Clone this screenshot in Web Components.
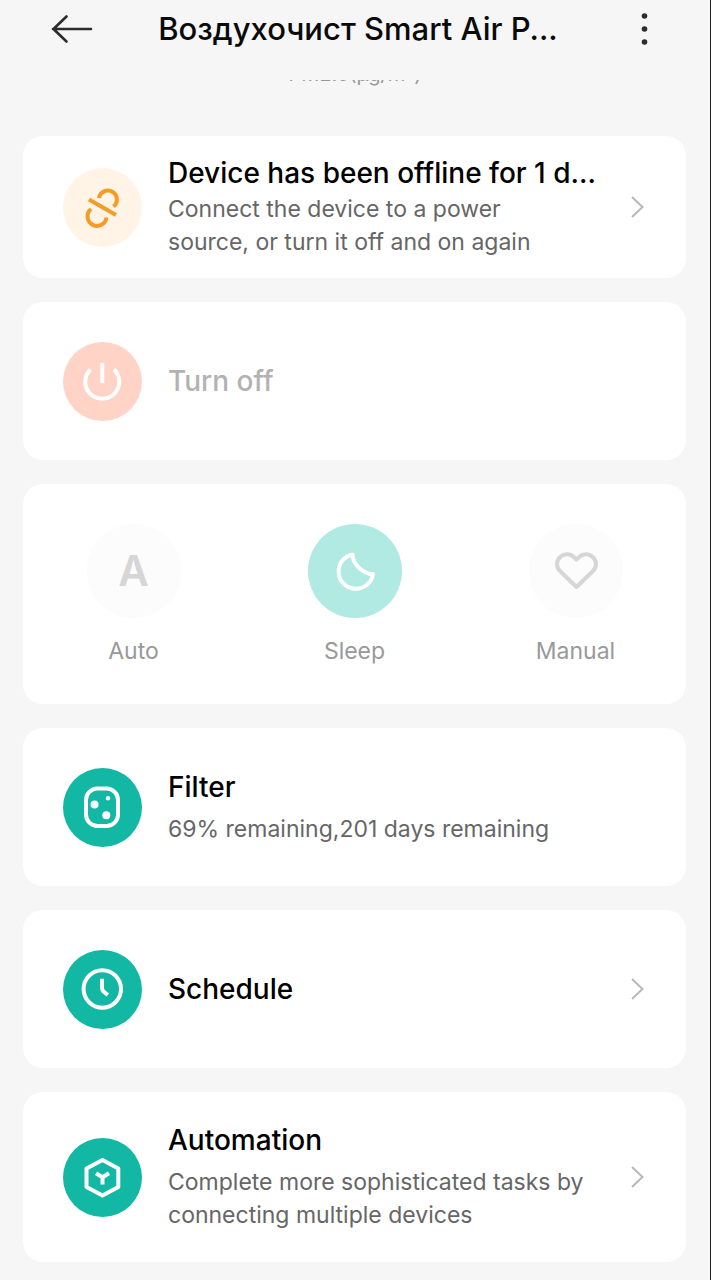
<!DOCTYPE html>
<html lang="en">
<head>
<meta charset="utf-8">
<meta name="viewport" content="width=device-width, initial-scale=1">
<title>Smart Air Purifier</title>
<style>
  body {
    margin: 0;
    background: #f6f6f6;
    font-family: Inter, "Liberation Sans", sans-serif;
  }
</style>
</head>
<body>
<purifier-page></purifier-page>

<script>
const ICONS = {
  offline: `
    <path d="M26 31.5L53 47"/>
    <path d="M36 30A9 9 0 1 1 50.5 38.5"/>
    <path d="M28 41A9.5 9.5 0 1 0 43.5 49.5"/>`,
  power: `
    <path d="M27.5 27.5A17 17 0 1 0 51 27.5"/>
    <path d="M39.3 21V41"/>`,
  filter: `
    <rect x="23" y="20.5" width="32" height="37.5" rx="11.5"/>
    <g fill="currentColor" stroke="none">
      <circle cx="31.5" cy="36.5" r="4"/>
      <circle cx="45" cy="30.3" r="2.2"/>
      <circle cx="43.3" cy="47.3" r="4"/>
    </g>`,
  clock: `
    <circle cx="39.3" cy="39" r="18.7"/>
    <path d="M39 28.8V38Q39 40 40.5 41.5L44.8 45"/>`,
  automation: `
    <path d="M39.5 22L55.3 30.6V49L39.5 57.6L23.5 49V30.6Z"/>
    <path d="M33 35.3L39.5 39.3L46 35.3M39.5 39.3V46.5"/>`
};

class AppHeader extends HTMLElement {
  constructor() {
    super();
    this.attachShadow({ mode: "open" });
  }

  connectedCallback() {
    this.shadowRoot.innerHTML = `
      <style>
        :host {
          display: block;
        }

        header {
          display: grid;
          grid-template-columns: 44px 1fr 44px;
          align-items: center;
          height: 58px;
          padding: 0 44px 22px 50px;
        }

        button {
          display: block;
          width: 44px;
          height: 44px;
          padding: 0;
          border: 0;
          background: none;
          color: #2c2c2c;
        }

        svg {
          display: block;
        }

        h1 {
          margin: 0;
          font-size: 31px;
          line-height: 40px;
          font-weight: 500;
          text-align: center;
          white-space: nowrap;
          color: #0a0a0a;
        }
      </style>

      <header>
        <button type="button" aria-label="Back">
          <svg width="44" height="44" viewBox="0 0 44 44" fill="none" stroke="currentColor" stroke-width="2.6" stroke-linecap="round" stroke-linejoin="round">
            <path d="M41 22H3M16.5 9.5L3.5 22L16.5 34.5"/>
          </svg>
        </button>
        <h1><slot></slot></h1>
        <button type="button" aria-label="More">
          <svg width="44" height="44" viewBox="0 0 44 44" fill="currentColor">
            <circle cx="22.5" cy="9" r="2.8"/>
            <circle cx="22.5" cy="22" r="2.8"/>
            <circle cx="22.5" cy="35" r="2.8"/>
          </svg>
        </button>
      </header>
    `;
  }
}

class InfoCard extends HTMLElement {
  constructor() {
    super();
    this.attachShadow({ mode: "open" });
  }

  connectedCallback() {
    const icon = ICONS[this.getAttribute("icon")] || "";
    const tag = this.hasAttribute("href") ? "a" : this.hasAttribute("action") ? "button" : "div";
    const attrs = tag === "a" ? `href="${this.getAttribute("href")}"` : tag === "button" ? `type="button" disabled` : "";
    const chevron = tag === "a" ? `
      <svg class="chevron" width="16" height="24" viewBox="0 0 16 24" aria-hidden="true">
        <path d="M2 2L12.5 12L2 22" fill="none" stroke="#b8b8b8" stroke-width="2"/>
      </svg>` : "";

    this.shadowRoot.innerHTML = `
      <style>
        :host {
          display: block;
          --tone: #12b8a3;
          --ink: #fff;
          --label: #000;
          --pad: 30px;
          --gap: 8px;
          --min: 158px;
          --wrap: wrap;
        }

        :host([tone="warn"]) {
          --tone: #fff4e6;
          --ink: #f59b26;
          --pad: 19px;
          --gap: 2px;
          --min: 142px;
          --wrap: balance;
        }

        :host([tone="danger"]) {
          --tone: #ffd3c6;
          --label: #b2b2b2;
        }

        .card {
          display: flex;
          align-items: center;
          gap: 26px;
          box-sizing: border-box;
          width: 100%;
          min-height: var(--min);
          padding: var(--pad) 40px;
          border: 0;
          border-radius: 20px;
          background: #fff;
          color: inherit;
          font: inherit;
          text-align: left;
          text-decoration: none;
        }

        .icon {
          flex: none;
          width: 79px;
          height: 79px;
          border-radius: 50%;
          background: var(--tone);
          color: var(--ink);
        }

        .text {
          display: flex;
          flex-direction: column;
          gap: var(--gap);
          flex: 1;
          min-width: 0;
        }

        .title {
          font-size: 28px;
          line-height: 36px;
          font-weight: 500;
          white-space: nowrap;
          color: var(--label);
        }

        ::slotted([slot="detail"]) {
          display: block;
          font-size: 23px;
          line-height: 33px;
          text-wrap: var(--wrap);
          color: #666;
        }

        .chevron {
          flex: none;
        }
      </style>

      <${tag} class="card" ${attrs}>
        <svg class="icon" viewBox="0 0 79 79" fill="none" stroke="currentColor" stroke-width="4" stroke-linejoin="round" aria-hidden="true">${icon}</svg>
        <span class="text">
          <span class="title"><slot></slot></span>
          <slot name="detail"></slot>
        </span>
        ${chevron}
      </${tag}>
    `;
  }
}

class ModeButton extends HTMLElement {
  constructor() {
    super();
    this.attachShadow({ mode: "open" });
  }

  connectedCallback() {
    this.shadowRoot.innerHTML = `
      <style>
        :host {
          display: block;
          --tone: #fcfcfc;
          --ink: #d6d6d6;
        }

        :host([active]) {
          --tone: #b0eae3;
          --ink: #fff;
        }

        button {
          display: flex;
          flex-direction: column;
          align-items: center;
          gap: 17px;
          width: 100%;
          padding: 0;
          border: 0;
          background: none;
          font: inherit;
          font-size: 23px;
          line-height: 32px;
          color: #999;
        }

        .disc {
          display: grid;
          place-items: center;
          width: 94px;
          height: 94px;
          border-radius: 50%;
          background: var(--tone);
          color: var(--ink);
        }
      </style>

      <button type="button" disabled>
        <span class="disc"><slot name="icon"></slot></span>
        <slot></slot>
      </button>
    `;
  }
}

class ModePicker extends HTMLElement {
  constructor() {
    super();
    this.attachShadow({ mode: "open" });
  }

  connectedCallback() {
    this.shadowRoot.innerHTML = `
      <style>
        :host {
          display: grid;
          grid-template-columns: repeat(3, 1fr);
          padding: 40px 0 37px;
          border-radius: 20px;
          background: #fff;
        }
      </style>
      <slot></slot>
    `;
  }
}

class PurifierPage extends HTMLElement {
  constructor() {
    super();
    this.attachShadow({ mode: "open" });
  }

  connectedCallback() {
    this.shadowRoot.innerHTML = `
      <style>
        :host {
          display: block;
          box-sizing: border-box;
          min-height: 100vh;
          border-right: 1px solid #222;
        }

        /* reading that has scrolled under the header */
        .reading {
          display: flex;
          justify-content: center;
          align-items: flex-end;
          height: 6px;
          overflow: hidden;
          font-size: 20px;
          line-height: 24px;
          color: #999;
        }

        main {
          display: flex;
          flex-direction: column;
          gap: 24px;
          padding: 50px 24px 18px 23px;
        }

        .letter {
          font-size: 42px;
          line-height: 48px;
          font-weight: 600;
        }

        mode-button svg {
          display: block;
          fill: none;
          stroke: currentColor;
          stroke-width: 4;
          stroke-linejoin: round;
        }
      </style>

      <app-header>Воздухочист Smart Air P...</app-header>
      <div class="reading">PM2.5(µg/m³)</div>
      <main>
        <info-card icon="offline" tone="warn" href="#offline">
          Device has been offline for 1 d...
          <span slot="detail">Connect the device to a power source, or turn it off and on again</span>
        </info-card>

        <info-card icon="power" tone="danger" action>Turn off</info-card>

        <mode-picker>
          <mode-button>
            <span slot="icon" class="letter">A</span>
            Auto
          </mode-button>
          <mode-button active>
            <svg slot="icon" width="94" height="94" viewBox="0 0 94 94" aria-hidden="true">
              <path d="M44.5 30.5A17.3 17.3 0 1 0 65 50C57 50.5 45 42 44.5 30.5Z"/>
            </svg>
            Sleep
          </mode-button>
          <mode-button>
            <svg slot="icon" width="94" height="94" viewBox="0 0 94 94" aria-hidden="true">
              <path d="M47.5 63L31 47C27 43 27 37 31 33.2C35 29.3 41 29.3 44.8 33L47.5 35.7L50.2 33C54 29.3 60 29.3 64 33.2C68 37 68 43 64 47Z"/>
            </svg>
            Manual
          </mode-button>
        </mode-picker>

        <info-card icon="filter">
          Filter
          <span slot="detail">69% remaining,201 days remaining</span>
        </info-card>

        <info-card icon="clock" href="#schedule">Schedule</info-card>

        <info-card icon="automation" href="#automation">
          Automation
          <span slot="detail">Complete more sophisticated tasks by connecting multiple devices</span>
        </info-card>
      </main>
    `;
  }
}

customElements.define("app-header", AppHeader);
customElements.define("info-card", InfoCard);
customElements.define("mode-button", ModeButton);
customElements.define("mode-picker", ModePicker);
customElements.define("purifier-page", PurifierPage);
</script>
</body>
</html>
